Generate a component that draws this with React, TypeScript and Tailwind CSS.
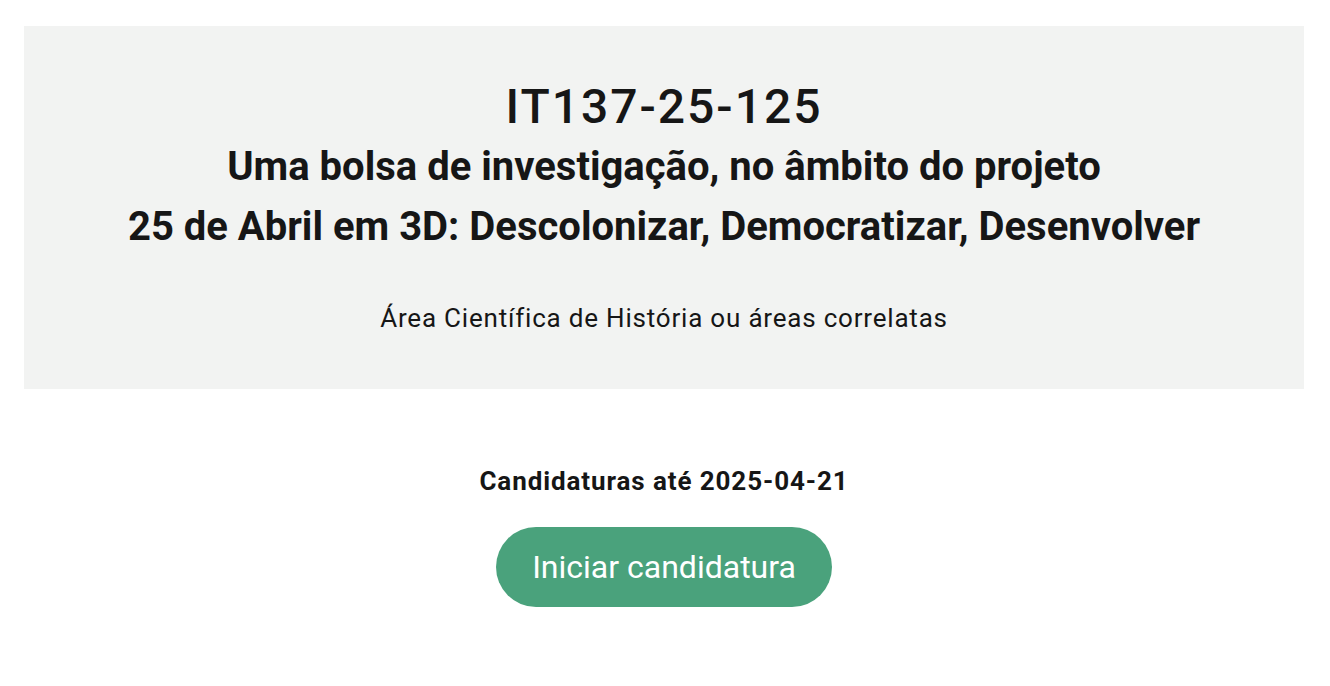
export default function App() {
  return (
    <div className="min-h-screen bg-white pl-6 pr-[26px] pt-[26px] text-[#161616]" style={{ fontFamily: 'Roboto, "Noto Sans", sans-serif' }}>
      <section className="flex h-[363px] flex-col items-center bg-[#f2f3f2] pt-[53px] text-center">
        <h1 className="text-[48px] font-medium leading-[56px] tracking-[2px]">IT137-25-125</h1>
        <h2 className="mt-[2px] text-[40px] font-bold leading-[60px]">
          Uma bolsa de investigação, no âmbito do projeto
          <br />
          25 de Abril em 3D: Descolonizar, Democratizar, Desenvolver
        </h2>
        <p className="mt-[45px] text-[26px] leading-[32px] tracking-[0.8px]">Área Científica de História ou áreas correlatas</p>
      </section>
      <div className="flex flex-col items-center pt-[76px]">
        <p className="text-[26px] font-bold leading-[32px] tracking-[0.9px]">Candidaturas até 2025-04-21</p>
        <button className="mt-[30px] h-[80px] rounded-full bg-[#4aa27c] px-[36px] text-[32px] text-white">
          Iniciar candidatura
        </button>
      </div>
    </div>
  );
}
